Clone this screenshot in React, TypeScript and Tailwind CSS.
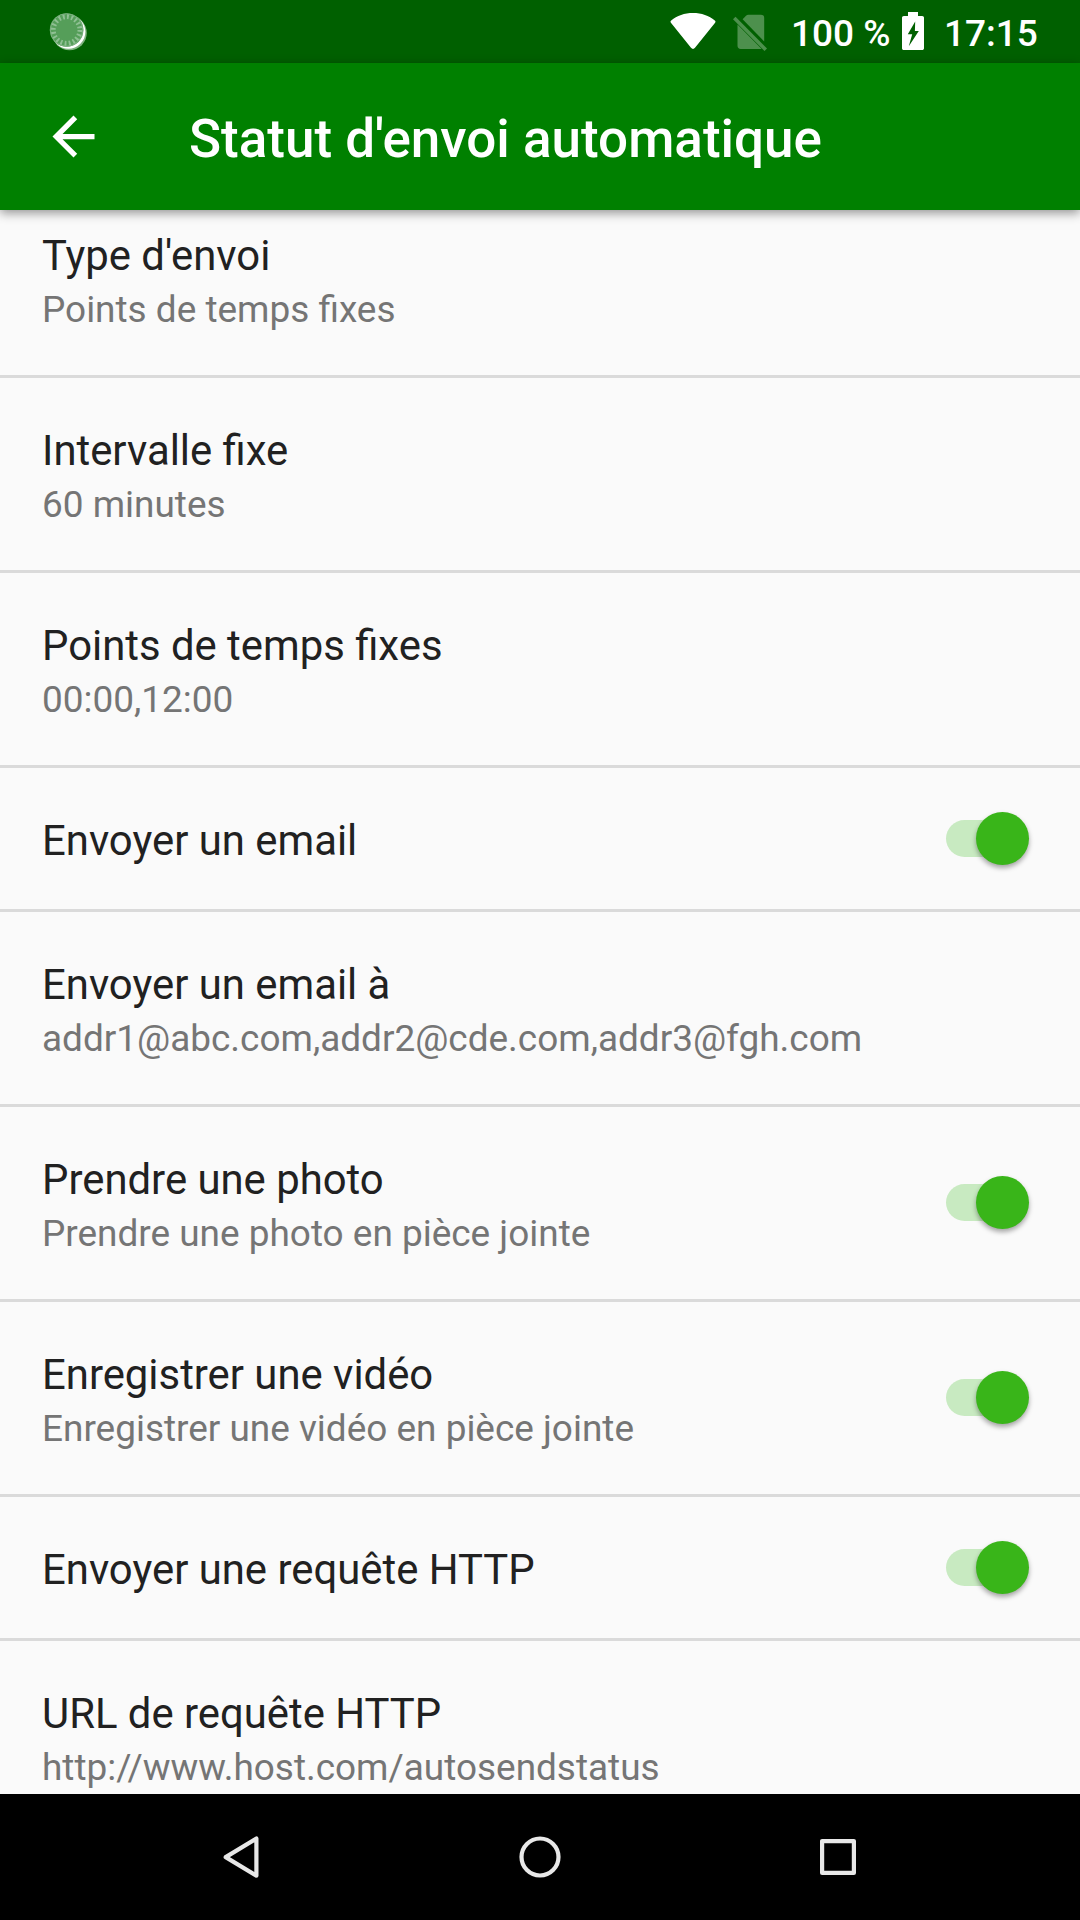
type Preference = {
  title: string;
  summary?: string;
  checked?: boolean;
};

const preferences: Preference[] = [
  { title: "Type d'envoi", summary: "Points de temps fixes" },
  { title: "Intervalle fixe", summary: "60 minutes" },
  { title: "Points de temps fixes", summary: "00:00,12:00" },
  { title: "Envoyer un email", checked: true },
  { title: "Envoyer un email à", summary: "addr1@abc.com,addr2@cde.com,addr3@fgh.com" },
  { title: "Prendre une photo", summary: "Prendre une photo en pièce jointe", checked: true },
  { title: "Enregistrer une vidéo", summary: "Enregistrer une vidéo en pièce jointe", checked: true },
  { title: "Envoyer une requête HTTP", checked: true },
  { title: "URL de requête HTTP", summary: "http://www.host.com/autosendstatus" },
];

function StatusBar() {
  return (
    <div className="flex h-[63px] shrink-0 items-center bg-[#006000] pl-[49px] pr-[42px] text-[37px] leading-[59px] font-medium text-white">
      <svg className="h-[40px] w-[40px]" viewBox="0 0 40 40">
        <circle cx="20.5" cy="21" r="17.3" fill="#7fb27f" />
        <circle cx="19.4" cy="19.8" r="17" fill="#fff" />
        <circle cx="17.6" cy="18" r="16.8" fill="#559e59" />
        <circle cx="17.6" cy="18" r="13.4" fill="none" stroke="#8fc093" strokeWidth="5" strokeDasharray="1.9 2.31" />
        <circle cx="17.6" cy="18" r="16.3" fill="none" stroke="#7db181" strokeWidth="1" />
      </svg>
      <div className="ml-auto flex items-center">
        <svg className="h-[63px] w-[46px]" viewBox="0 0 46 63" fill="#fff">
          <path d="M1.2 20.5C7 15.5 14.5 13 23 13s16 2.5 21.8 7.5c.8.7.9 1.4.3 2.2L25 47.8c-1.2 1.5-2.8 1.5-4 0L.9 22.7c-.6-.8-.5-1.5.3-2.2z" />
        </svg>
        <svg className="ml-[17px] h-[63px] w-[34px]" viewBox="0 0 34 63" fill="#4d904d">
          <path d="M9.6 19.2 13 15.7c.7-.7 1.4-1 2.4-1H28c2 0 3.2 1.2 3.2 3.2v23.5z" />
          <path d="M4.5 24.5 28.5 48.8c-.2.1-.4.2-.8.2H7.7c-2 0-3.2-1.2-3.2-3.2z" />
          <path d="M2.5 16.8 0 19.3 31.5 51l2.5-2.5z" />
        </svg>
        <span className="ml-[24px] w-[99px] pt-[4px] whitespace-nowrap">100 %</span>
        <svg className="ml-[12px] h-[63px] w-[22px]" viewBox="0 0 22 63">
          <path fill="#fff" d="M6 12h10v4h4.2c1 0 1.8.8 1.8 1.8v30.4c0 1-.8 1.8-1.8 1.8H1.8C.8 50 0 49.2 0 48.2V17.8C0 16.8.8 16 1.8 16H6z" />
          <path fill="#006000" d="M13.2 21.5 5.8 34.2h4.4l-3.4 12L16.8 31h-3.9z" />
        </svg>
        <span className="ml-[20px] w-[94px] pt-[4px] whitespace-nowrap">17:15</span>
      </div>
    </div>
  );
}

function AppBar() {
  return (
    <header className="z-10 flex h-[147px] shrink-0 items-center bg-[#008000] pl-[42px] shadow-[0_3px_10px_rgba(0,0,0,0.42)]">
      <svg className="h-[63px] w-[63px]" viewBox="0 0 24 24" fill="#fff">
        <path d="M20 11H7.83l5.59-5.59L12 4l-8 8 8 8 1.41-1.41L7.83 13H20v-2z" />
      </svg>
      <h1 className="ml-[84px] pt-[5px] text-[53px] leading-[62px] font-medium text-white">
        Statut d'envoi automatique
      </h1>
    </header>
  );
}

function Toggle() {
  return (
    <div className="flex h-[53px] w-[83px] items-center">
      <div className="h-[37px] w-[75px] rounded-full bg-[#c8eac1]" />
      <div className="-ml-[45px] h-[53px] w-[53px] shrink-0 rounded-full bg-[#39b519] shadow-[0_3px_5px_rgba(0,0,0,0.35)]" />
    </div>
  );
}

function PreferenceRow({ title, summary, checked }: Preference) {
  return (
    <li
      className={`flex shrink-0 items-start justify-between border-b-[3px] border-[#dadada] pl-[42px] pr-[51px] ${
        summary ? "h-[195px]" : "h-[144px]"
      }`}
    >
      <div className="pt-[45px] whitespace-nowrap">
        <div className="text-[41.85px] leading-[56px] text-[#212121]">{title}</div>
        {summary && (
          <div className="pt-[2px] text-[36.95px] leading-[48px] text-[#757575]">{summary}</div>
        )}
      </div>
      {checked && (
        <div className={summary ? "pt-[69px]" : "pt-[44px]"}>
          <Toggle />
        </div>
      )}
    </li>
  );
}

function NavigationBar() {
  return (
    <nav className="flex h-[126px] shrink-0 items-center justify-between bg-black px-[210px]">
      <svg className="h-[64px] w-[64px]" viewBox="0 0 64 64" fill="none" stroke="#e8e8e8" strokeWidth="4.2" strokeLinejoin="round">
        <path d="M46.4 13.5v37.2L15.7 32.1z" />
      </svg>
      <svg className="h-[64px] w-[64px]" viewBox="0 0 64 64" fill="none" stroke="#e8e8e8" strokeWidth="4.2">
        <circle cx="32" cy="32" r="18.5" />
      </svg>
      <svg className="h-[64px] w-[64px]" viewBox="0 0 64 64" fill="none" stroke="#e8e8e8" strokeWidth="4.2" strokeLinejoin="round">
        <path d="M16.1 16.1h31.8v31.8H16.1z" />
      </svg>
    </nav>
  );
}

export default function App() {
  return (
    <div className="flex h-[1920px] w-[1080px] flex-col overflow-hidden bg-[#fafafa] font-['Roboto',sans-serif]">
      <StatusBar />
      <AppBar />
      <main className="min-h-0 flex-1 overflow-hidden">
        {/* list is scrolled slightly under the app bar */}
        <ul className="-mt-[27px] flex flex-col">
          {preferences.map((preference) => (
            <PreferenceRow key={preference.title} {...preference} />
          ))}
        </ul>
      </main>
      <NavigationBar />
    </div>
  );
}
